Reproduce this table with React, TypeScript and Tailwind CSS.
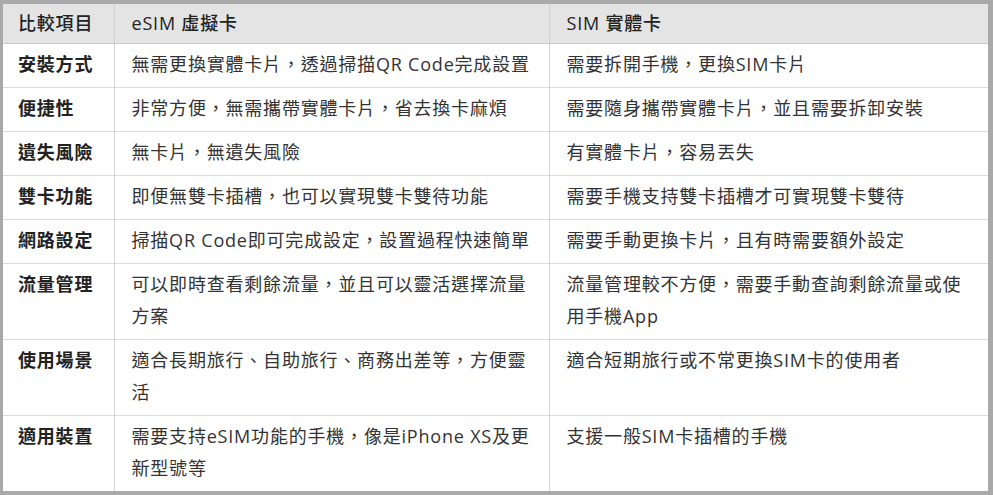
import React from "react";

const rows: [string, string, string][] = [
	["安裝方式", "無需更換實體卡片，透過掃描QR Code完成設置", "需要拆開手機，更換SIM卡片"],
	["便捷性", "非常方便，無需攜帶實體卡片，省去換卡麻煩", "需要隨身攜帶實體卡片，並且需要拆卸安裝"],
	["遺失風險", "無卡片，無遺失風險", "有實體卡片，容易丟失"],
	["雙卡功能", "即便無雙卡插槽，也可以實現雙卡雙待功能", "需要手機支持雙卡插槽才可實現雙卡雙待"],
	["網路設定", "掃描QR Code即可完成設定，設置過程快速簡單", "需要手動更換卡片，且有時需要額外設定"],
	["流量管理", "可以即時查看剩餘流量，並且可以靈活選擇流量方案", "流量管理較不方便，需要手動查詢剩餘流量或使用手機App"],
	["使用場景", "適合長期旅行、自助旅行、商務出差等，方便靈活", "適合短期旅行或不常更換SIM卡的使用者"],
	["適用裝置", "需要支持eSIM功能的手機，像是iPhone XS及更新型號等", "支援一般SIM卡插槽的手機"],
];

const font = "font-['Open_Sans','Noto_Sans_CJK_TC',sans-serif]";

export default function App() {
	return (
		<div className={`w-[993px] h-[495px] bg-[#a9a9a9] pt-[4px] pl-[3px] pr-[5px] pb-[4px] ${font}`}>
			<table className="w-[985px] table-fixed border-collapse bg-white text-[18px] leading-[32px] tracking-[0.8px] text-[#333]">
				<colgroup>
					<col className="w-[111px]" />
					<col className="w-[435px]" />
					<col className="w-[439px]" />
				</colgroup>
				<thead>
					<tr className="bg-[#e4e4e4] h-[39px] border-b border-[#c8c8c8]">
						<th className="text-left font-medium text-[#222] px-[15px] py-[2px] border-r border-[#d2d2d2]">比較項目</th>
						<th className="text-left font-medium text-[#222] px-[17px] py-[2px] border-r border-[#d2d2d2]">eSIM 虛擬卡</th>
						<th className="text-left font-medium text-[#222] px-[17px] py-[2px]">SIM 實體卡</th>
					</tr>
				</thead>
				<tbody>
					{rows.map(([k, a, b], i) => (
						<tr key={k} className={i < rows.length - 1 ? "border-b border-[#dcdcdc]" : ""}>
							<td className="align-top font-bold text-[#222] px-[15px] pt-[4px] pb-[7px] border-r border-[#d2d2d2]">{k}</td>
							<td className="align-top px-[17px] pt-[4px] pb-[7px] border-r border-[#d2d2d2]">{a}</td>
							<td className="align-top px-[17px] pt-[4px] pb-[7px]">{b}</td>
						</tr>
					))}
				</tbody>
			</table>
		</div>
	);
}
